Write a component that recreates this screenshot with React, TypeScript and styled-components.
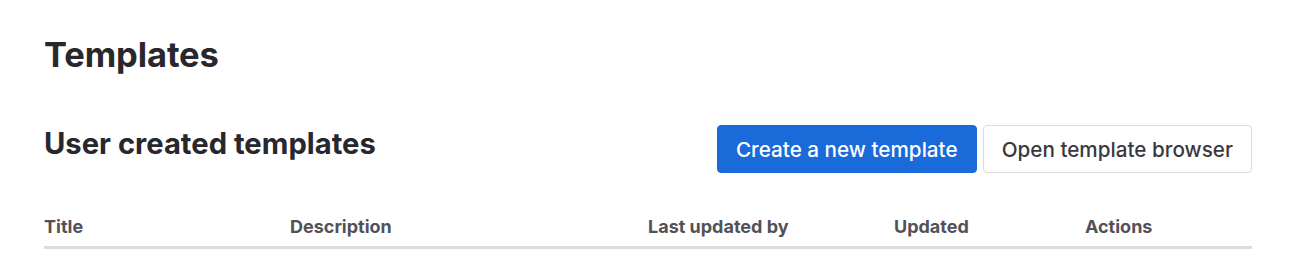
import React from 'react';
import styled, { createGlobalStyle } from 'styled-components';

const GlobalStyle = createGlobalStyle`
    body {
        margin: 0;
        background: #ffffff;
        font-family: Inter, "Noto Sans", sans-serif;
        color: #28272d;
    }
`;

const columns = [
    { label: 'Title', width: 246 },
    { label: 'Description', width: 358 },
    { label: 'Last updated by', width: 246 },
    { label: 'Updated', width: 191 },
    { label: 'Actions', width: 167 },
];

const App = () => {
    return (
        <>
            <GlobalStyle />
            <Page>
                <PageTitle>Templates</PageTitle>
                <SectionHeader>
                    <SectionTitle>User created templates</SectionTitle>
                    <Actions>
                        <Button variant="primary">Create a new template</Button>
                        <Button variant="default">Open template browser</Button>
                    </Actions>
                </SectionHeader>
                <Table>
                    <thead>
                        <tr>
                            {columns.map(col => (
                                <Th key={col.label} style={{ width: col.width }}>
                                    {col.label}
                                </Th>
                            ))}
                        </tr>
                    </thead>
                </Table>
            </Page>
        </>
    );
};

const Page = styled.main`
    padding: 35px 44px 0;
    box-sizing: border-box;
    width: 1296px;
`;

const PageTitle = styled.h1`
    margin: 0;
    font-size: 34.5px;
    line-height: 40px;
    font-weight: 700;
    letter-spacing: -0.1px;
    color: #28272d;
`;

const SectionHeader = styled.div`
    display: flex;
    justify-content: space-between;
    align-items: flex-start;

    margin-top: 50px;
`;

const SectionTitle = styled.h2`
    margin: 0;
    font-size: 29.2px;
    line-height: 38px;
    font-weight: 700;
    color: #28272d;
`;

const Actions = styled.div`
    display: flex;
    gap: 6px;
`;

const Button = styled.button<{ variant: 'primary' | 'default' }>`
    height: 48px;
    padding: 0 18px;
    border-radius: 4px;
    font-family: Inter, "Noto Sans", sans-serif;
    font-size: 20.7px;
    font-weight: 500;
    cursor: pointer;

    background: ${props => (props.variant === 'primary' ? '#1a6ad9' : '#ffffff')};
    color: ${props => (props.variant === 'primary' ? '#ffffff' : '#3a383f')};
    border: 1px solid ${props => (props.variant === 'primary' ? '#1a6ad9' : '#dcdcde')};
`;

const Table = styled.table`
    width: 100%;
    margin-top: 41px;
    border-collapse: collapse;
    table-layout: fixed;
`;

const Th = styled.th`
    padding: 1px 0 7px;
    text-align: left;
    font-size: 18px;
    line-height: 24px;
    font-weight: 700;
    color: #535158;
    border-bottom: 3px solid #dcdcde;
`;

export default App;
